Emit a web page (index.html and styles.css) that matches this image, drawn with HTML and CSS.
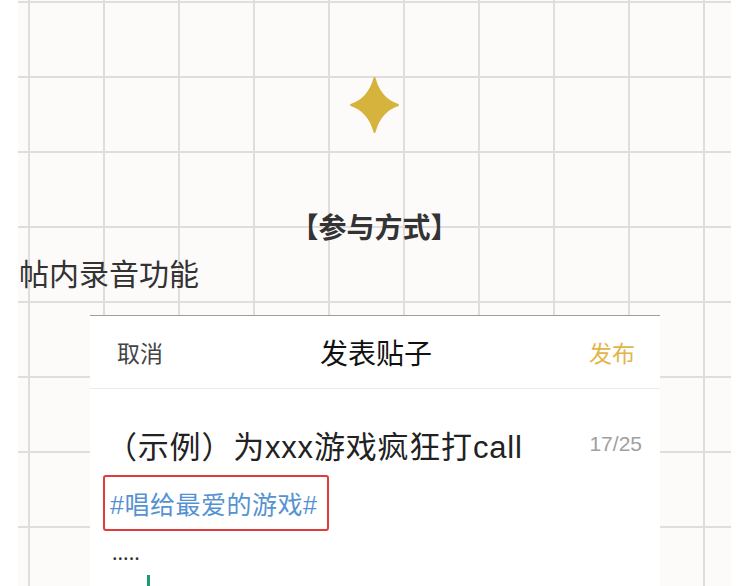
FILE: index.html
```html
<!DOCTYPE html>
<html lang="zh-CN">
<head>
  <meta charset="UTF-8">
  <title>参与方式</title>
  <link rel="stylesheet" href="styles.css">
</head>
<body>
  <div class="sheet">
    <div class="spark">
      <svg width="49" height="56" viewBox="0 0 49 56">
        <path d="M24.5 1 Q30 22 48 28 Q30 34 24.5 55 Q19 34 1 28 Q19 22 24.5 1 Z"
              fill="#d5b33d" stroke="#d5b33d" stroke-width="2" stroke-linejoin="round"/>
      </svg>
    </div>

    <h2 class="section-title">【参与方式】</h2>
    <p class="feature">帖内录音功能</p>

    <div class="post-card">
      <div class="post-head">
        <span class="cancel">取消</span>
        <span class="head-title">发表贴子</span>
        <span class="publish">发布</span>
      </div>
      <div class="post-body">
        <div class="title-row">
          <span class="post-title">（示例）为xxx游戏疯狂打call</span>
          <span class="count">17/25</span>
        </div>
        <div class="topic-box"><span class="topic">#唱给最爱的游戏#</span></div>
        <div class="dots">.....</div>
        <div class="caret"></div>
      </div>
    </div>
  </div>
</body>
</html>
```

FILE: styles.css
```css
body {
  margin: 0;
  height: 586px;
  overflow: hidden;
  background: #fff;
  font-family: "Noto Sans CJK SC", "Noto Sans", sans-serif;
}

/* squared paper */
.sheet {
  margin-left: 18px;
  width: 713px;
  height: 586px;
  overflow: hidden;
  background-color: #fdfafa;
  background-image:
    linear-gradient(to right, #e2dddd 2px, transparent 2px),
    linear-gradient(to bottom, #e2dddd 2px, transparent 2px);
  background-size: 75px 75px;
  background-position: 10px 1px;
}

.spark {
  display: flex;
  justify-content: center;
  padding-top: 77px;
  height: 56px;
}

.section-title {
  margin: 79px 0 0;
  font-size: 28px;
  line-height: 28px;
  font-weight: bold;
  text-align: center;
  color: #333;
}

.feature {
  margin: 18px 0 0 1px;
  font-size: 30px;
  line-height: 29px;
  color: #333;
}

.post-card {
  margin: 28px 0 0 72px;
  width: 570px;
  height: 300px;
  background: #fff;
  border-top: 1px solid #9e9e9e;
}

.post-head {
  display: grid;
  grid-template-columns: 1fr auto 1fr;
  align-items: center;
  height: 72px;
  padding: 0 25px 0 27px;
  border-bottom: 1px solid #ebebeb;
}

.cancel {
  font-size: 23px;
  color: #444;
}

.head-title {
  font-size: 28px;
  color: #111;
}

.publish {
  justify-self: end;
  font-size: 23px;
  color: #e2b54b;
}

.post-body {
  padding-left: 13px;
}

/* latin glyphs in the editor read wider than the CJK font's own */
.title-row,
.topic-box {
  font-family: "Liberation Sans", "Noto Sans CJK SC", sans-serif;
}

.title-row {
  display: flex;
  justify-content: space-between;
  align-items: center;
  height: 40px;
  padding: 35px 18px 0 3px;
}

.post-title {
  font-size: 31px;
  letter-spacing: 0.8px;
  color: #222;
}

.count {
  font-size: 21px;
  color: #a0a0a0;
}

.topic-box {
  display: flex;
  align-items: center;
  box-sizing: border-box;
  width: 226px;
  height: 56px;
  margin-top: 11px;
  padding-left: 5px;
  border: 2px solid #e03c3c;
  border-radius: 3px;
}

.topic {
  font-size: 25px;
  letter-spacing: 0.5px;
  color: #5592d2;
}

.dots {
  margin: 9px 0 0 9px;
  font-size: 20px;
  line-height: 24px;
  color: #333;
}

.caret {
  width: 3px;
  height: 20px;
  margin: 11px 0 0 44px;
  background: #1f9a6f;
}
```
